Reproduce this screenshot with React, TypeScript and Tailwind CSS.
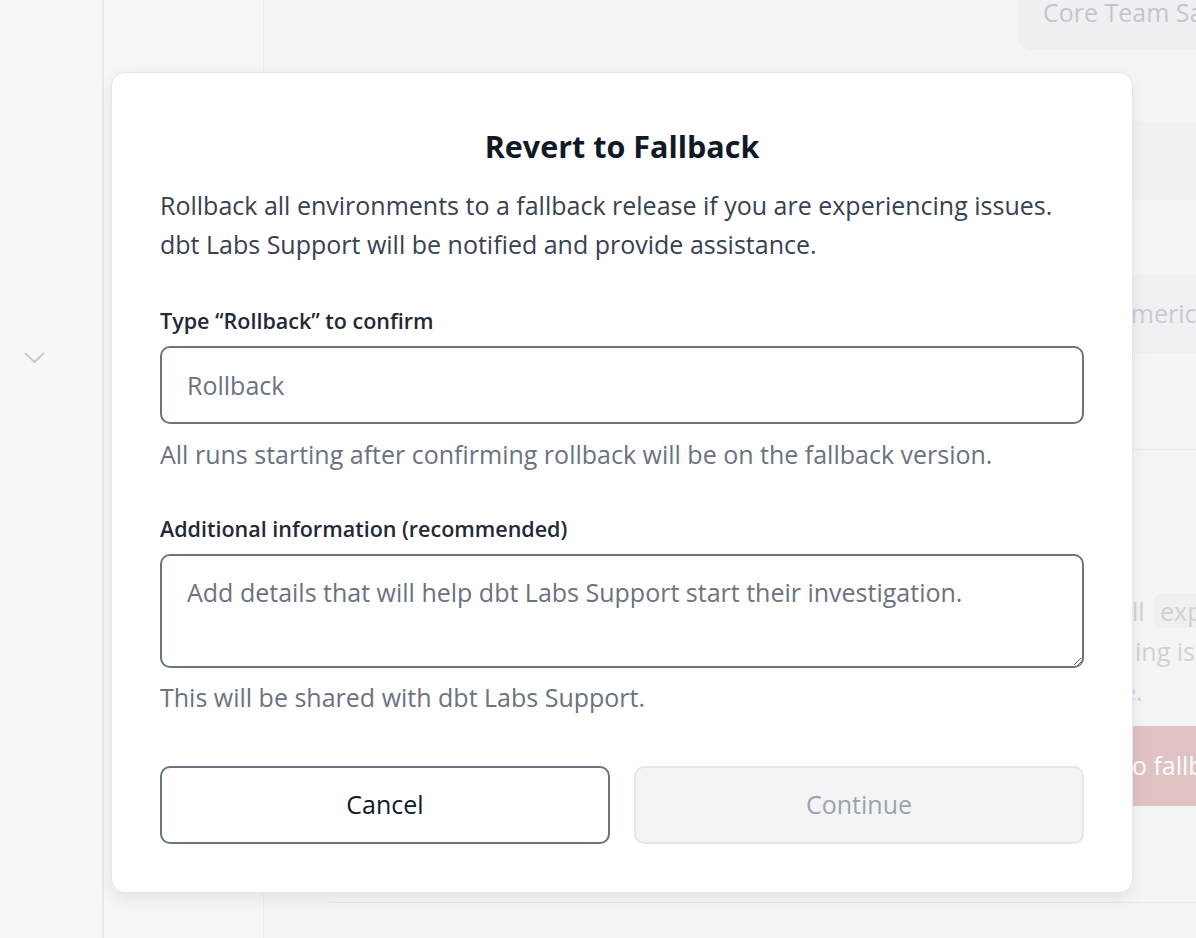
import React from "react";

const FONT = { fontFamily: "'Open Sans', 'Noto Sans', sans-serif" };

export default function App() {
  return (
    <div className="relative h-[938px] w-[1196px] overflow-hidden bg-[#f5f6f8]" style={FONT}>
      {/* Faded page behind the dialog */}
      <div className="flex h-full">
        <div className="flex w-[104px] flex-none flex-col items-start border-r-2 border-[#e9eaee] bg-[#f6f7f9] pt-[351px] pl-[24px]">
          <svg width="21" height="14" viewBox="0 0 21 14" fill="none">
            <path d="M1.5 2.5 L10.5 11 L19.5 2.5" stroke="#c8cace" strokeWidth="2" strokeLinecap="round" strokeLinejoin="round" />
          </svg>
        </div>
        <div className="w-[160px] flex-none border-r border-[#eceef1] bg-[#f5f6f8]" />
        <div className="flex min-w-0 flex-1 flex-col bg-[#f4f5f7]">
          <div className="flex h-[122px] justify-end">
            <div className="h-[50px] w-[178px] rounded-bl-[14px] bg-[#eff0f3] pl-[25px] text-[25px] leading-[24px] whitespace-nowrap text-[#c4c6cb]">
              Core Team Sandbox
            </div>
          </div>
          <div className="ml-[65px] h-[78px] bg-[#f0f1f4]" />
          <div className="h-[75px]" />
          <div className="ml-[65px] flex h-[78px] items-center bg-[#f0f1f4] pl-[786px] text-[25px] whitespace-nowrap text-[#c9cbd0]">
            Americas
          </div>
          <div className="ml-[65px] h-[97px] border-b border-[#e8e9ec]" />
          <div className="ml-[65px] flex flex-col pt-[141px] pl-[789px] text-[25px] leading-[40px] whitespace-nowrap text-[#d0d2d6]">
            <div>
              all <span className="ml-[3px] rounded-md bg-[#eff0f2] px-[6px]">experimental</span>
            </div>
            <div className="pl-[17px]">ing issues</div>
            <div className="pl-[4px]">e.</div>
          </div>
          <div className="ml-[65px] mt-[15px] flex h-[80px] items-center bg-[#e0c2c2] pl-[794px] text-[25px] whitespace-nowrap text-white">
            to fallback
          </div>
          <div className="ml-[65px] h-[97px] border-b border-[#e8e9ec]" />
        </div>
      </div>

      {/* Dialog */}
      <div className="absolute top-[72px] left-[111px] w-[1022px] rounded-[14px] border border-[#e6e7ea] bg-white px-[48px] pt-[49px] pb-[48px] shadow-[0_6px_16px_rgba(17,24,39,0.08)]">
        <h2 className="text-center text-[30.5px] leading-[48px] font-bold text-[#111827]">Revert to Fallback</h2>
        <p className="mt-[16px] text-[25px] leading-[39px] text-[#374151]">
          Rollback all environments to a fallback release if you are experiencing issues.
          <br />
          dbt Labs Support will be notified and provide assistance.
        </p>

        <label className="mt-[43px] block text-[21.5px] leading-[28px] font-semibold text-[#1f2937]">
          Type “Rollback” to confirm
        </label>
        <input
          type="text"
          placeholder="Rollback"
          className="mt-[11px] block h-[78px] w-full rounded-[10px] border-2 border-[#6b7280] bg-white px-[25px] text-[25px] text-[#111827] outline-none placeholder:text-[#6b7280]"
        />
        <p className="mt-[12px] text-[25px] leading-[36px] text-[#6b7280]">
          All runs starting after confirming rollback will be on the fallback version.
        </p>

        <label className="mt-[43px] block text-[21.5px] leading-[28px] font-semibold text-[#1f2937]">
          Additional information (recommended)
        </label>
        <textarea
          placeholder="Add details that will help dbt Labs Support start their investigation."
          className="mt-[11px] block h-[114px] w-full rounded-[10px] border-2 border-[#6b7280] bg-white px-[25px] pt-[18px] text-[25px] leading-[36px] text-[#111827] outline-none placeholder:text-[#6b7280]"
        />
        <p className="mt-[11px] text-[25px] leading-[36px] text-[#6b7280]">This will be shared with dbt Labs Support.</p>

        <div className="mt-[51px] grid grid-cols-2 gap-[24px]">
          <button className="h-[78px] rounded-[10px] border-2 border-[#6b7280] bg-white text-[25px] text-[#111827]">
            Cancel
          </button>
          <button disabled className="h-[78px] rounded-[10px] border-2 border-[#e5e7eb] bg-[#f3f4f6] text-[25px] text-[#9ca3af]">
            Continue
          </button>
        </div>
      </div>
    </div>
  );
}
